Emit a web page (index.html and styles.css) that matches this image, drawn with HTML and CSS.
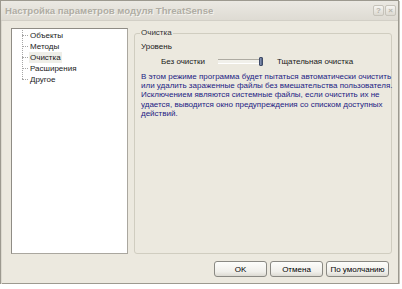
FILE: index.html
```html
<!DOCTYPE html>
<html lang="ru">
<head>
    <meta charset="UTF-8">
    <title>Настройка параметров модуля ThreatSense</title>
    <link rel="stylesheet" href="styles.css">
</head>
<body>
    <div class="window">
        <div class="titlebar">
            <span class="title">Настройка параметров модуля ThreatSense</span>
            <div class="title-buttons">
                <span class="tb">?</span>
                <span class="tb">&times;</span>
            </div>
        </div>

        <div class="client">
            <div class="main">
                <div class="tree">
                    <ul class="branch">
                        <li>Объекты</li>
                        <li>Методы</li>
                        <li><span class="selected">Очистка</span></li>
                        <li>Расширения</li>
                        <li>Другое</li>
                    </ul>
                </div>

                <fieldset class="group">
                    <legend>Очистка</legend>
                    <div class="caption">Уровень</div>
                    <div class="slider-row">
                        <span class="low">Без очистки</span>
                        <div class="track"><span class="thumb"></span></div>
                        <span class="high">Тщательная очистка</span>
                    </div>
                    <p class="note">
                        В этом режиме программа будет пытаться автоматически очистить<br>
                        или удалить зараженные файлы без вмешательства пользователя.<br>
                        Исключением являются системные файлы, если очистить их не<br>
                        удается, выводится окно предупреждения со списком доступных<br>
                        действий.
                    </p>
                </fieldset>
            </div>

            <div class="footer">
                <button class="btn">OK</button>
                <button class="btn">Отмена</button>
                <button class="btn wide">По умолчанию</button>
            </div>
        </div>
    </div>
</body>
</html>
```

FILE: styles.css
```css
body {
    margin: 0;
    background: #ffffff;
    font-family: "Liberation Sans", Arial, sans-serif;
    font-size: 8px;
    color: #1a1a1a;
}

.window {
    width: 397px;
    height: 282px;
    border: 1px solid #9c998f;
    background: #ece9df;
    box-shadow: 1px 1px 0 #c9c6bd;
}

.titlebar {
    display: flex;
    align-items: center;
    justify-content: space-between;
    padding: 0 0 0 4px;
    background: linear-gradient(#ebe9e3, #dedbd3);
    border-bottom: 1px solid #d2cfc6;
    box-sizing: border-box;
    height: 20px;
}

.title {
    color: #b0ada4;
    font-weight: bold;
    font-size: 9.6px;
    text-shadow: 1px 1px 0 #f4f3ef;
}

.title-buttons {
    display: flex;
    gap: 1px;
    margin-right: 2px;
    align-self: flex-start;
    margin-top: 4px;
}

.tb {
    width: 11px;
    height: 11px;
    box-sizing: border-box;
    border: 1px solid #c6c3ba;
    border-radius: 2px;
    background: linear-gradient(#f6f5f1, #dcd9d1);
    color: #b6b3aa;
    font-size: 8px;
    line-height: 9px;
    text-align: center;
    font-weight: bold;
}

.client {
    padding: 7px 6px 7px 9px;
    border-left: 1px solid #dcd9cf;
}

.main {
    display: flex;
    gap: 6px;
    height: 226px;
}

.tree {
    width: 117px;
    box-sizing: border-box;
    background: #fff;
    border: 1px solid #aaa79f;
    border-top-color: #8f8c85;
    border-left-color: #8f8c85;
}

.branch {
    list-style: none;
    margin: 1px 0 0 10px;
    padding: 0;
    background: repeating-linear-gradient(to bottom, #a6a6a6 0 1px, transparent 1px 2px) no-repeat 0 0 / 1px calc(100% - 5px);
}

.branch li {
    display: flex;
    align-items: center;
    height: 11px;
    line-height: 11px;
}

.branch li::before {
    content: "";
    width: 6px;
    border-top: 1px dotted #a6a6a6;
    margin-right: 2px;
    flex: none;
}

.selected {
    background: #efeee8;
    padding: 0 1px;
    margin-left: -1px;
}

.group {
    width: 258px;
    box-sizing: border-box;
    margin: 0;
    padding: 0 6px;
    border: 1px solid #d0cdc0;
    border-radius: 3px;
    min-width: 0;
}

.group legend {
    padding: 0 1px;
    margin-left: -1px;
    color: #333;
    line-height: 10px;
}

.caption {
    margin-top: 4px;
    line-height: 10px;
}

.slider-row {
    display: flex;
    align-items: center;
    height: 10px;
    margin-top: 4px;
    padding-left: 20px;
}

.low {
    width: 57px;
}

.track {
    width: 45px;
    height: 3px;
    background: #f1f0ea;
    border-top: 1px solid #aeaba2;
    border-bottom: 1px solid #fff;
    display: flex;
    justify-content: flex-end;
    align-items: center;
    margin-right: 14px;
}

.thumb {
    width: 4px;
    height: 9px;
    box-sizing: border-box;
    background: linear-gradient(to right, #8d9ab8, #4e5d80);
    border: 1px solid #3f4b68;
    border-radius: 1px;
}

.note {
    margin: 6px 0 0;
    color: #1c1c84;
    line-height: 9.2px;
    white-space: nowrap;
}

.footer {
    display: flex;
    justify-content: flex-end;
    gap: 3px;
    margin-top: 7px;
    margin-right: 3px;
}

.btn {
    width: 53px;
    height: 16px;
    padding: 0;
    font-family: inherit;
    font-size: 8px;
    color: #000;
    border: 1px solid #8a8983;
    border-radius: 3px;
    background: linear-gradient(#fdfdfb, #f0efea 70%, #dcdad2);
}

.btn.wide {
    width: 63px;
}
```
